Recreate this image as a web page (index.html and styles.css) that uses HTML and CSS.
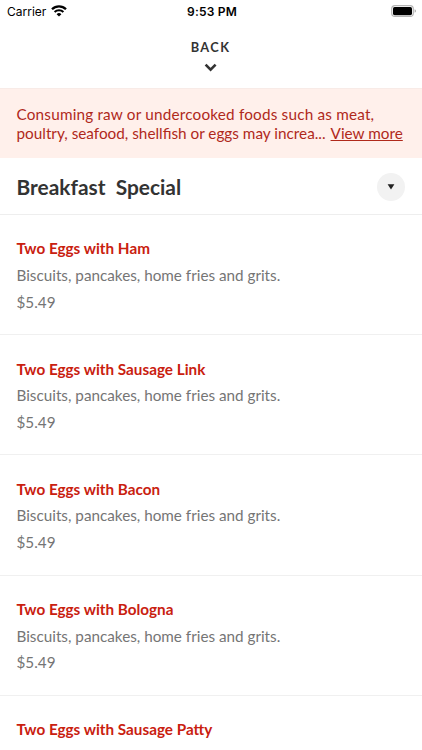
FILE: index.html
```html
<!DOCTYPE html>
<html lang="en">
<head>
    <meta charset="UTF-8">
    <meta name="viewport" content="width=device-width, initial-scale=1.0">
    <title>Breakfast Special</title>
    <link rel="stylesheet" href="styles.css">
</head>
<body>
    <div class="status-bar">
        <div class="carrier">
            <span>Carrier</span>
            <svg class="wifi" width="16" height="12" viewBox="0 0 16 12" fill="none" stroke="#000">
                <path d="M1 4.2a10 10 0 0 1 14 0" stroke-width="2.3"/>
                <path d="M3.6 7a6.3 6.3 0 0 1 8.8 0" stroke-width="2.1"/>
                <path d="M8 11.6 5.6 9.2a3.4 3.4 0 0 1 4.8 0z" fill="#000" stroke="none"/>
            </svg>
        </div>
        <span class="time">9:53 PM</span>
        <svg class="battery" width="26" height="13" viewBox="0 0 26 13">
            <rect x="0.7" y="0.7" width="21.6" height="10.8" rx="3.2" fill="#fff" stroke="#b5b5b5" stroke-width="1.2"/>
            <rect x="2" y="2" width="19" height="8.2" rx="1.6" fill="#000"/>
            <path d="M23.7 4.3v3.4c1.5-.5 1.5-2.9 0-3.4z" fill="#999"/>
        </svg>
    </div>

    <header class="header">
        <button class="back">BACK</button>
        <svg class="chevron" width="14" height="10" viewBox="0 0 14 10">
            <path d="M1.6 1.6l5 5 5-5" fill="none" stroke="#333" stroke-width="2.6"/>
        </svg>
    </header>

    <div class="notice">
        <p class="notice-start">Consuming raw or undercooked foods such as meat,</p>
        <p class="notice-end"><span>poultry, seafood, shellfish or eggs may increa...</span><a class="view-more">View more</a></p>
    </div>

    <div class="category">
        <h1>Breakfast&nbsp; Special</h1>
        <button class="toggle">
            <svg width="8" height="6" viewBox="0 0 8 6"><path d="M0.6 0.3h6.8L4 5.6z" fill="#222"/></svg>
        </button>
    </div>

    <ul class="menu">
        <li class="item">
            <h2>Two Eggs with Ham</h2>
            <p>Biscuits, pancakes, home fries and grits.</p>
            <p>$5.49</p>
        </li>
        <li class="item">
            <h2>Two Eggs with Sausage Link</h2>
            <p>Biscuits, pancakes, home fries and grits.</p>
            <p>$5.49</p>
        </li>
        <li class="item">
            <h2>Two Eggs with Bacon</h2>
            <p>Biscuits, pancakes, home fries and grits.</p>
            <p>$5.49</p>
        </li>
        <li class="item">
            <h2>Two Eggs with Bologna</h2>
            <p>Biscuits, pancakes, home fries and grits.</p>
            <p>$5.49</p>
        </li>
        <li class="item">
            <h2>Two Eggs with Sausage Patty</h2>
        </li>
    </ul>
</body>
</html>
```

FILE: styles.css
```css
* {
    box-sizing: border-box;
    margin: 0;
    padding: 0;
}

body {
    font-family: Lato, sans-serif;
    background: #fff;
    color: #333;
}

button {
    border: none;
    background: none;
    font-family: inherit;
    color: inherit;
}

.status-bar {
    display: grid;
    grid-template-columns: 1fr auto 1fr;
    align-items: center;
    height: 22px;
    padding: 0 5px 0 7px;
    font-family: Inter, sans-serif;
    font-size: 12px;
    color: #000;
}

.carrier {
    display: flex;
    align-items: center;
    gap: 5px;
}

.time {
    font-weight: 600;
    letter-spacing: 0.2px;
}

.battery {
    justify-self: end;
}

.header {
    display: flex;
    flex-direction: column;
    align-items: center;
    height: 66px;
    padding: 17px 1px 0 0;
}

.back {
    font-size: 12.8px;
    font-weight: 700;
    line-height: 16px;
    letter-spacing: 1.4px;
}

.chevron {
    margin-top: 8px;
}

.notice {
    height: 70px;
    padding: 16px 17px 0 16.5px;
    border-top: 1px solid #f8ebe7;
    background: #fff0eb;
    color: #b0291b;
    font-size: 15.3px;
    line-height: 18.8px;
    white-space: nowrap;
}

.notice-start {
    letter-spacing: 0.19px;
}

.notice-end {
    display: flex;
    gap: 5px;
}

.view-more {
    text-decoration: underline;
}

.category {
    display: flex;
    align-items: center;
    justify-content: space-between;
    height: 57px;
    padding: 0 17px 0 16.5px;
    border-bottom: 1px solid #eee;
}

.category h1 {
    font-size: 20.9px;
    font-weight: 700;
}

.toggle {
    display: flex;
    align-items: center;
    justify-content: center;
    width: 28px;
    height: 28px;
    margin-top: 1px;
    border-radius: 50%;
    background: #f2f2f2;
}

.menu {
    list-style: none;
}

.item {
    height: 120.2px;
    padding: 20.4px 17px 0 16.5px;
    border-bottom: 1px solid #f0f0f0;
    font-size: 15.25px;
    line-height: 26.6px;
    color: #757575;
}

.item:last-child {
    height: 55px;
    border-bottom: none;
}

.item h2 {
    font-size: 15.27px;
    font-weight: 700;
    color: #c9200f;
}
```
